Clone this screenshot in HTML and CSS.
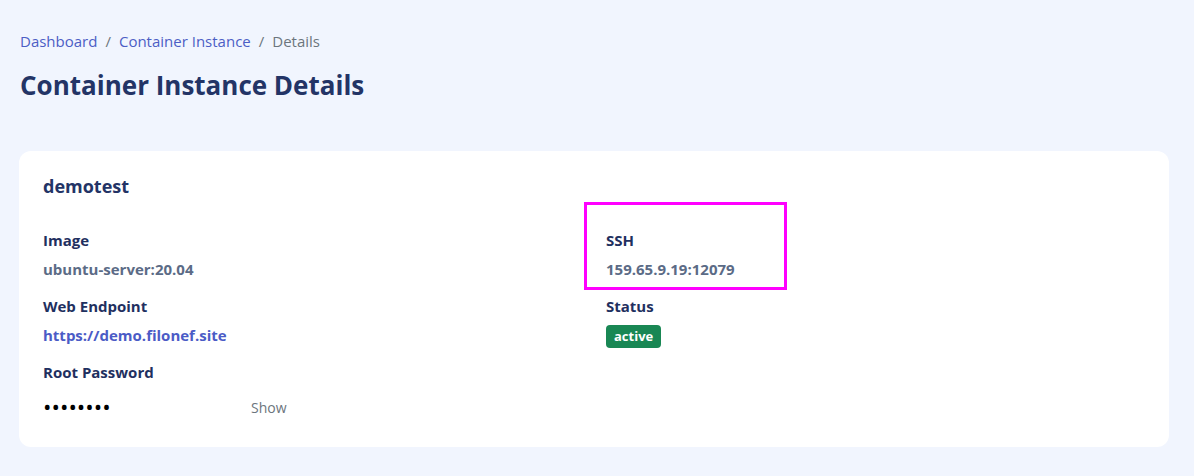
FILE: index.html
```html
<!DOCTYPE html>
<html lang="en">
<head>
<meta charset="utf-8">
<title>Container Instance Details</title>
<link rel="stylesheet" href="styles.css">
</head>
<body>
<main class="page">
  <nav class="breadcrumb">
    <a href="#" class="crumb-link">Dashboard</a>
    <span class="sep">/</span>
    <a href="#" class="crumb-link">Container Instance</a>
    <span class="sep">/</span>
    <span class="crumb-current">Details</span>
  </nav>
  <h1 class="page-title">Container Instance Details</h1>

  <section class="card">
    <h2 class="card-title">demotest</h2>
    <div class="grid">
      <div class="col">
        <div class="field">
          <div class="label">Image</div>
          <div class="value">ubuntu-server:20.04</div>
        </div>
        <div class="field">
          <div class="label">Web Endpoint</div>
          <a href="#" class="value link">https://demo.filonef.site</a>
        </div>
        <div class="field">
          <div class="label">Root Password</div>
          <div class="password-row">
            <span class="dots">••••••••</span>
            <button class="show-btn">Show</button>
          </div>
        </div>
      </div>
      <div class="col">
        <div class="field highlighted">
          <div class="label">SSH</div>
          <div class="value">159.65.9.19:12079</div>
          <span class="highlight-box"></span>
        </div>
        <div class="field">
          <div class="label">Status</div>
          <span class="badge">active</span>
        </div>
      </div>
    </div>
  </section>
</main>
</body>
</html>
```

FILE: styles.css
```css
* { box-sizing: border-box; }
html, body { margin: 0; padding: 0; }
body {
  background: #f1f5fe;
  font-family: "Open Sans", "Noto Sans", sans-serif;
  color: #233466;
}
.page {
  padding: 30px 25px 0 19px;
}
.breadcrumb {
  display: flex;
  align-items: center;
  gap: 8px;
  font-size: 15px;
  line-height: 22px;
  padding-left: 1px;
}
.crumb-link {
  color: #4c5ec5;
  text-decoration: none;
}
.sep { color: #6c757d; }
.crumb-current { color: #6c757d; }
.page-title {
  margin: 13px 0 0 0;
  font-size: 26px;
  line-height: 40px;
  font-weight: 700;
  color: #233466;
  padding-left: 1px;
}
.card {
  margin-top: 46px;
  background: #ffffff;
  border-radius: 12px;
  padding: 23px 24px 24px 24px;
  width: 1150px;
}
.card-title {
  margin: 0;
  font-size: 18px;
  line-height: 24px;
  font-weight: 700;
  color: #233466;
}
.grid {
  display: grid;
  grid-template-columns: 1fr 1fr;
  column-gap: 24px;
  margin-top: 32px;
}
.col {
  display: flex;
  flex-direction: column;
  gap: 17px;
}
.field {
  display: flex;
  flex-direction: column;
  align-items: flex-start;
  gap: 9px;
}
.label {
  font-size: 15px;
  line-height: 20px;
  font-weight: 700;
  color: #1f3060;
}
.value {
  font-size: 15px;
  line-height: 20px;
  font-weight: 700;
  color: #5b6b86;
}
.link {
  color: #4b5bc6;
  text-decoration: none;
}
.highlighted { position: relative; }
.highlight-box {
  position: absolute;
  left: -22px;
  top: -28px;
  width: 203px;
  height: 88px;
  border: 3px solid #ff00ff;
  pointer-events: none;
}
.password-row {
  display: flex;
  align-items: center;
  height: 32px;
}
.dots {
  width: 208px;
  font-size: 22.5px;
  line-height: 32px;
  color: #000;
}
.show-btn {
  background: none;
  border: none;
  padding: 0;
  font-family: inherit;
  font-size: 14px;
  color: #6c757d;
  cursor: pointer;
}
.badge {
  display: inline-block;
  background: #198754;
  color: #ffffff;
  font-size: 13px;
  font-weight: 700;
  line-height: 15px;
  padding: 4px 8px;
  border-radius: 4px;
}
```
